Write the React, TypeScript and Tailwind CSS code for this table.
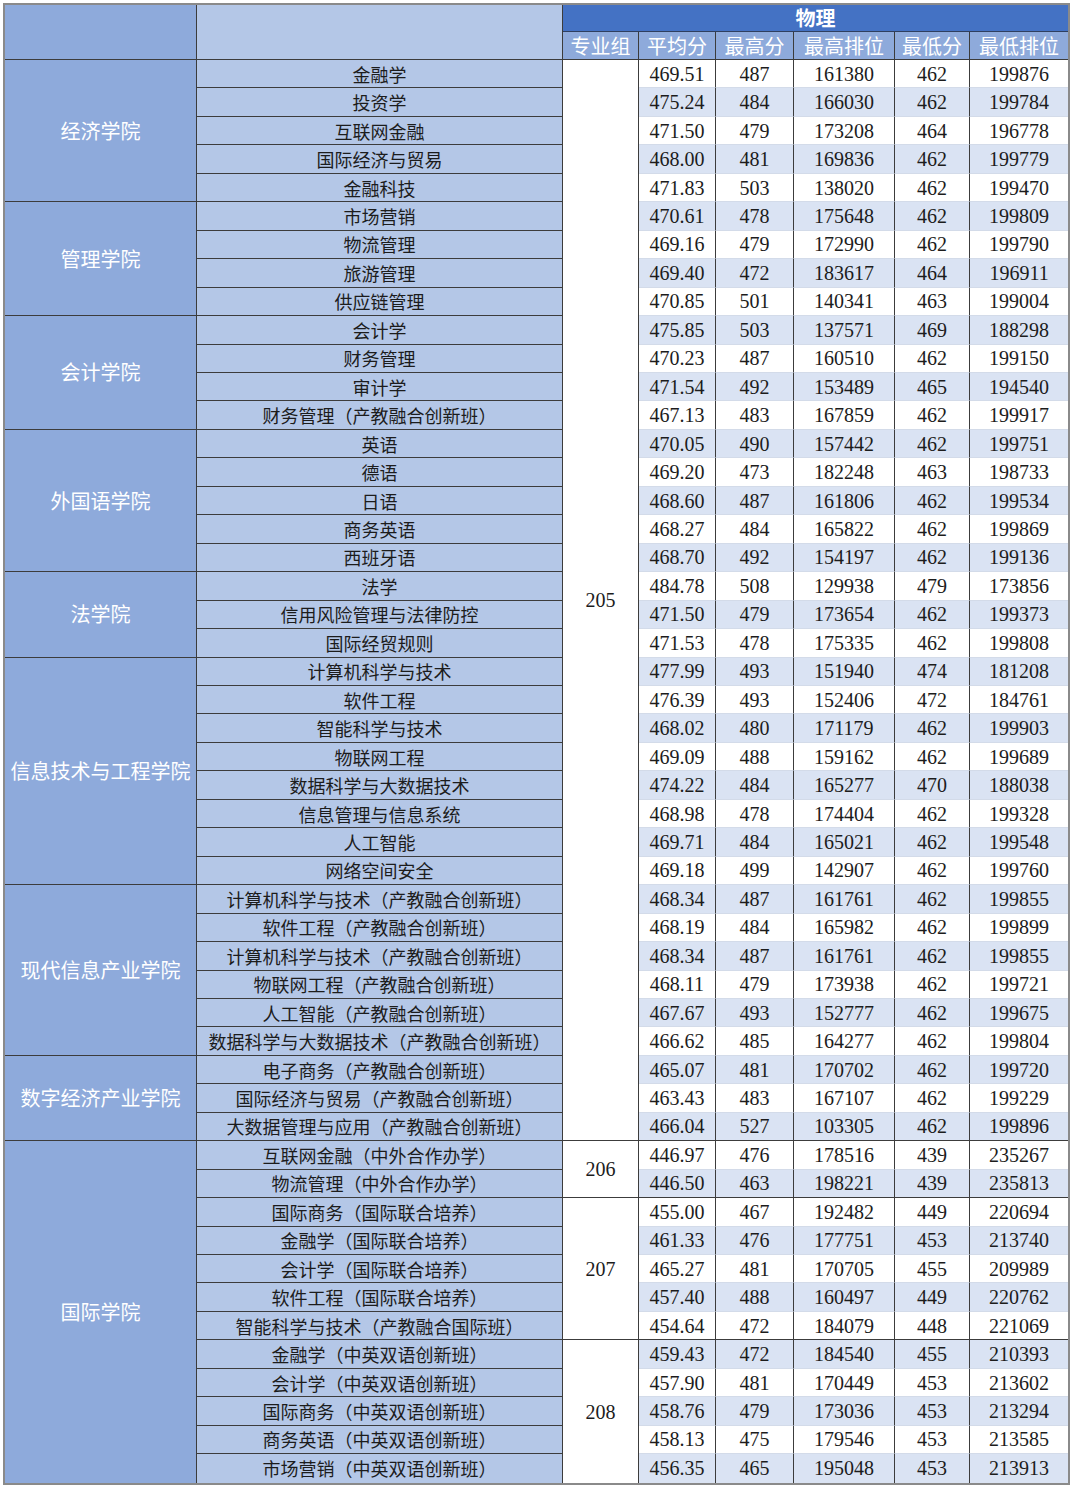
import React from 'react';
import clsx from 'clsx';

type Row = [string, string, string, string, string, string];

interface College {
  name: string;
  rows: Row[];
}

const colleges: College[] = [
  {
    name: '经济学院',
    rows: [
      ['金融学', '469.51', '487', '161380', '462', '199876'],
      ['投资学', '475.24', '484', '166030', '462', '199784'],
      ['互联网金融', '471.50', '479', '173208', '464', '196778'],
      ['国际经济与贸易', '468.00', '481', '169836', '462', '199779'],
      ['金融科技', '471.83', '503', '138020', '462', '199470'],
    ],
  },
  {
    name: '管理学院',
    rows: [
      ['市场营销', '470.61', '478', '175648', '462', '199809'],
      ['物流管理', '469.16', '479', '172990', '462', '199790'],
      ['旅游管理', '469.40', '472', '183617', '464', '196911'],
      ['供应链管理', '470.85', '501', '140341', '463', '199004'],
    ],
  },
  {
    name: '会计学院',
    rows: [
      ['会计学', '475.85', '503', '137571', '469', '188298'],
      ['财务管理', '470.23', '487', '160510', '462', '199150'],
      ['审计学', '471.54', '492', '153489', '465', '194540'],
      ['财务管理（产教融合创新班）', '467.13', '483', '167859', '462', '199917'],
    ],
  },
  {
    name: '外国语学院',
    rows: [
      ['英语', '470.05', '490', '157442', '462', '199751'],
      ['德语', '469.20', '473', '182248', '463', '198733'],
      ['日语', '468.60', '487', '161806', '462', '199534'],
      ['商务英语', '468.27', '484', '165822', '462', '199869'],
      ['西班牙语', '468.70', '492', '154197', '462', '199136'],
    ],
  },
  {
    name: '法学院',
    rows: [
      ['法学', '484.78', '508', '129938', '479', '173856'],
      ['信用风险管理与法律防控', '471.50', '479', '173654', '462', '199373'],
      ['国际经贸规则', '471.53', '478', '175335', '462', '199808'],
    ],
  },
  {
    name: '信息技术与工程学院',
    rows: [
      ['计算机科学与技术', '477.99', '493', '151940', '474', '181208'],
      ['软件工程', '476.39', '493', '152406', '472', '184761'],
      ['智能科学与技术', '468.02', '480', '171179', '462', '199903'],
      ['物联网工程', '469.09', '488', '159162', '462', '199689'],
      ['数据科学与大数据技术', '474.22', '484', '165277', '470', '188038'],
      ['信息管理与信息系统', '468.98', '478', '174404', '462', '199328'],
      ['人工智能', '469.71', '484', '165021', '462', '199548'],
      ['网络空间安全', '469.18', '499', '142907', '462', '199760'],
    ],
  },
  {
    name: '现代信息产业学院',
    rows: [
      ['计算机科学与技术（产教融合创新班）', '468.34', '487', '161761', '462', '199855'],
      ['软件工程（产教融合创新班）', '468.19', '484', '165982', '462', '199899'],
      ['计算机科学与技术（产教融合创新班）', '468.34', '487', '161761', '462', '199855'],
      ['物联网工程（产教融合创新班）', '468.11', '479', '173938', '462', '199721'],
      ['人工智能（产教融合创新班）', '467.67', '493', '152777', '462', '199675'],
      ['数据科学与大数据技术（产教融合创新班）', '466.62', '485', '164277', '462', '199804'],
    ],
  },
  {
    name: '数字经济产业学院',
    rows: [
      ['电子商务（产教融合创新班）', '465.07', '481', '170702', '462', '199720'],
      ['国际经济与贸易（产教融合创新班）', '463.43', '483', '167107', '462', '199229'],
      ['大数据管理与应用（产教融合创新班）', '466.04', '527', '103305', '462', '199896'],
    ],
  },
  {
    name: '国际学院',
    rows: [
      ['互联网金融（中外合作办学）', '446.97', '476', '178516', '439', '235267'],
      ['物流管理（中外合作办学）', '446.50', '463', '198221', '439', '235813'],
      ['国际商务（国际联合培养）', '455.00', '467', '192482', '449', '220694'],
      ['金融学（国际联合培养）', '461.33', '476', '177751', '453', '213740'],
      ['会计学（国际联合培养）', '465.27', '481', '170705', '455', '209989'],
      ['软件工程（国际联合培养）', '457.40', '488', '160497', '449', '220762'],
      ['智能科学与技术（产教融合国际班）', '454.64', '472', '184079', '448', '221069'],
      ['金融学（中英双语创新班）', '459.43', '472', '184540', '455', '210393'],
      ['会计学（中英双语创新班）', '457.90', '481', '170449', '453', '213602'],
      ['国际商务（中英双语创新班）', '458.76', '479', '173036', '453', '213294'],
      ['商务英语（中英双语创新班）', '458.13', '475', '179546', '453', '213585'],
      ['市场营销（中英双语创新班）', '456.35', '465', '195048', '453', '213913'],
    ],
  },
];

// 专业组 merged cells, in row order
const groups = [
  { code: '205', span: 38 },
  { code: '206', span: 2 },
  { code: '207', span: 5 },
  { code: '208', span: 5 },
];

const heads = ['专业组', '平均分', '最高分', '最高排位', '最低分', '最低排位'];

const cjk = "font-['Noto_Sans_CJK_SC',sans-serif]";
const num = "font-['Liberation_Serif','Noto_Sans_CJK_SC',serif]";

export default function App() {
  const total = colleges.reduce((n, c) => n + c.rows.length, 0);

  // flatten with span info
  const flat: { row: Row; college?: College; groupStart?: { code: string; span: number }; groupEnd: boolean }[] = [];
  let groupIdx = 0;
  let groupLeft = 0;
  colleges.forEach((c) => {
    c.rows.forEach((row, i) => {
      let groupStart;
      if (groupLeft === 0) {
        groupStart = groups[groupIdx];
        groupLeft = groupStart.span;
        groupIdx++;
      }
      groupLeft--;
      flat.push({ row, college: i === 0 ? c : undefined, groupStart, groupEnd: groupLeft === 0 });
    });
  });

  return (
    <div className="bg-white min-h-screen p-[3px]">
      <div className="inline-block border-2 border-[#8a8a8a]">
        <table className="table-fixed border-separate border-spacing-0 w-[1063px]">
          <colgroup>
            <col className="w-[192px]" />
            <col className="w-[366px]" />
            <col className="w-[76px]" />
            <col className="w-[77px]" />
            <col className="w-[78px]" />
            <col className="w-[101px]" />
            <col className="w-[75px]" />
            <col className="w-[98px]" />
          </colgroup>
          <thead>
            <tr className="h-[27px]">
              <td rowSpan={2} className="p-0 bg-[#8eaadb] border-r border-b border-[#3c3c3c]" />
              <td rowSpan={2} className="p-0 bg-[#b4c7e7] border-r border-b border-[#3c3c3c]" />
              <td
                colSpan={6}
                className={clsx(cjk, 'p-0 bg-[#4472c4] border-b border-[#2f3f5f] text-center text-white text-[20px] font-bold leading-none')}
              >
                物理
              </td>
            </tr>
            <tr className="h-[28px]">
              {heads.map((h, i) => (
                <td
                  key={h}
                  className={clsx(
                    cjk,
                    'p-0 bg-[#8eaadb] border-b border-[#3c3c3c] text-center text-white text-[20px] leading-none whitespace-nowrap',
                    i < heads.length - 1 && 'border-r'
                  )}
                >
                  {h}
                </td>
              ))}
            </tr>
          </thead>
          <tbody>
            {flat.map(({ row, college, groupStart, groupEnd }, i) => {
              const last = i === total - 1;
              const stripe = i % 2 === 0 ? 'bg-white' : 'bg-[#dae3f3]';
              return (
                <tr key={i} className="h-[28.46px]">
                  {college && (
                    <td
                      rowSpan={college.rows.length}
                      className={clsx(
                        cjk,
                        'p-0 bg-[#8eaadb] border-r border-[#3c3c3c] text-center align-middle text-white text-[20px] leading-none whitespace-nowrap',
                        i + college.rows.length < total && 'border-b'
                      )}
                    >
                      {college.name}
                    </td>
                  )}
                  <td
                    className={clsx(
                      cjk,
                      'p-0 bg-[#b4c7e7] border-r border-[#3c3c3c] text-center text-[18px] text-[#1c1c1c] leading-none whitespace-nowrap',
                      !last && 'border-b'
                    )}
                  >
                    {row[0]}
                  </td>
                  {groupStart && (
                    <td
                      rowSpan={groupStart.span}
                      className={clsx(
                        num,
                        'p-0 bg-white border-r border-[#3c3c3c] text-center align-middle text-[20px] text-[#1c1c1c] leading-none',
                        i + groupStart.span < total && 'border-b'
                      )}
                    >
                      {groupStart.code}
                    </td>
                  )}
                  {row.slice(1).map((v, j) => (
                    <td
                      key={j}
                      className={clsx(
                        num,
                        stripe,
                        'p-0 text-center text-[20px] text-[#1c1c1c] leading-none',
                        j < 4 && 'border-r border-r-[#3c3c3c]',
                        !last && 'border-b',
                        groupEnd ? 'border-b-[#3c3c3c]' : 'border-b-[#d3dbe9]'
                      )}
                    >
                      {v}
                    </td>
                  ))}
                </tr>
              );
            })}
          </tbody>
        </table>
      </div>
    </div>
  );
}
